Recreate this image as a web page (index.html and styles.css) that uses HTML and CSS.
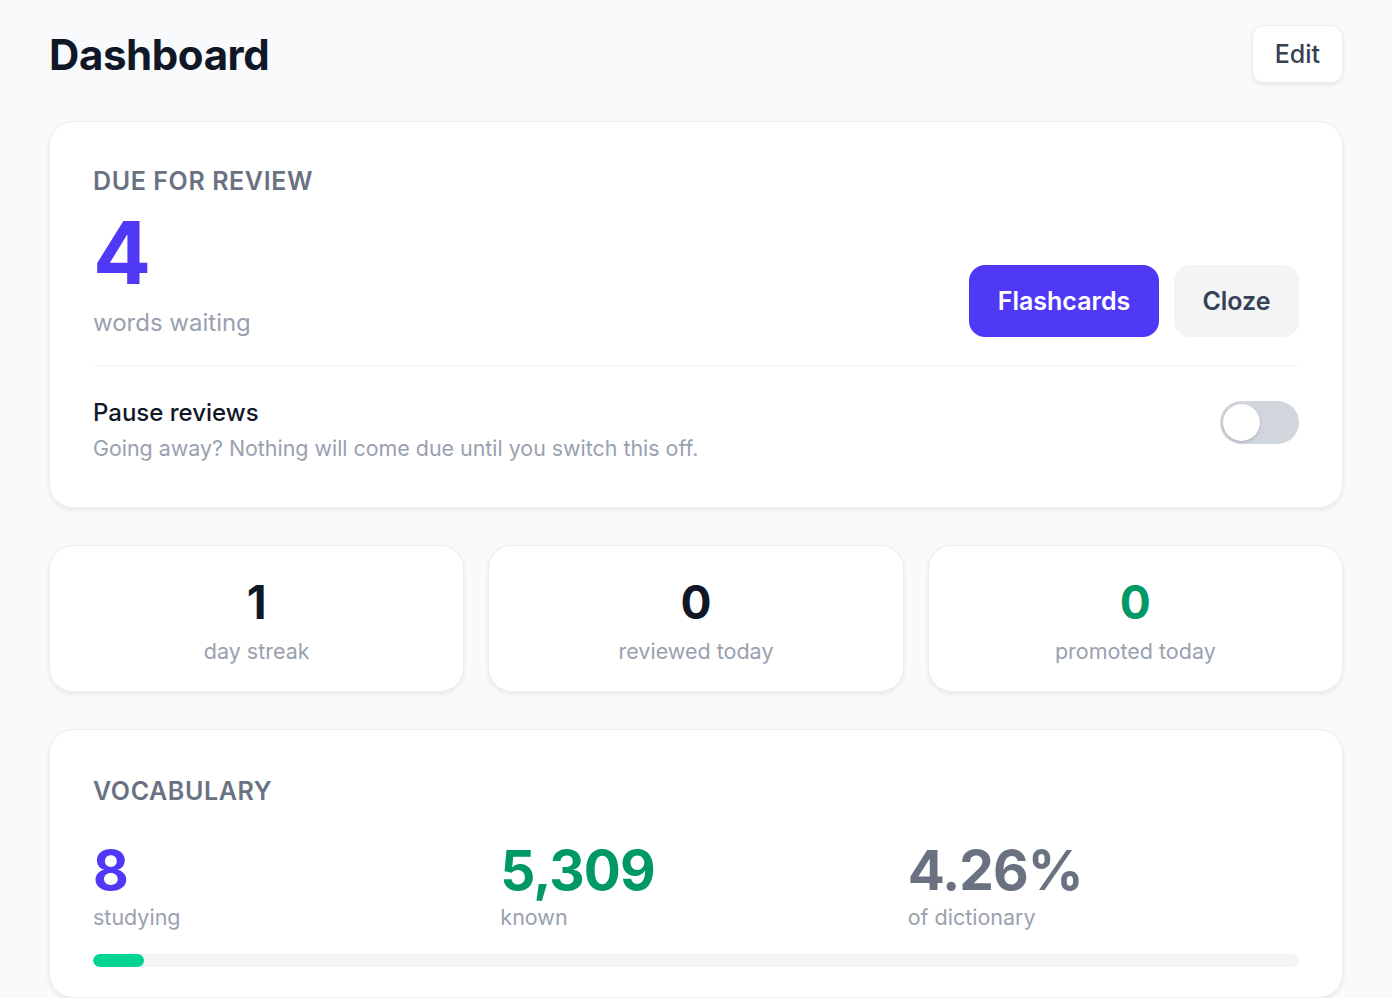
FILE: index.html
```html
<!DOCTYPE html>
<html lang="en">
  <head>
    <meta charset="UTF-8" />
    <meta name="viewport" content="width=device-width, initial-scale=1.0" />
    <title>Dashboard</title>
    <link rel="stylesheet" href="styles.css">
  </head>

  <body>
    <div class="page">
      <header class="top-bar">
        <h1>Dashboard</h1>
        <button class="edit-btn">Edit</button>
      </header>

      <!-- Due for review -->
      <section class="card review-card">
        <div class="review-row">
          <div>
            <div class="card-label">Due for review</div>
            <div class="due-count">4</div>
            <div class="due-sub">words waiting</div>
          </div>
          <div class="review-actions">
            <button class="btn btn-primary">Flashcards</button>
            <button class="btn btn-light">Cloze</button>
          </div>
        </div>

        <div class="pause-row">
          <div>
            <div class="pause-title">Pause reviews</div>
            <div class="pause-sub">Going away? Nothing will come due until you switch this off.</div>
          </div>
          <div class="toggle"><span class="knob"></span></div>
        </div>
      </section>

      <!-- Today stats -->
      <div class="stats">
        <div class="card stat">
          <div class="stat-num">1</div>
          <div class="stat-label">day streak</div>
        </div>
        <div class="card stat">
          <div class="stat-num">0</div>
          <div class="stat-label">reviewed today</div>
        </div>
        <div class="card stat">
          <div class="stat-num green">0</div>
          <div class="stat-label">promoted today</div>
        </div>
      </div>

      <!-- Vocabulary -->
      <section class="card vocab-card">
        <div class="card-label">Vocabulary</div>
        <div class="vocab-grid">
          <div>
            <div class="vocab-num indigo">8</div>
            <div class="vocab-label">studying</div>
          </div>
          <div>
            <div class="vocab-num green">5,309</div>
            <div class="vocab-label">known</div>
          </div>
          <div>
            <div class="vocab-num gray">4.26%</div>
            <div class="vocab-label">of dictionary</div>
          </div>
        </div>
        <div class="progress">
          <div class="progress-fill" style="width: 4.26%"></div>
        </div>
      </section>
    </div>
  </body>
</html>
```

FILE: styles.css
```css
body {
  margin: 0;
  background-color: #f9fafb;
  font-family: Inter, "Noto Sans", sans-serif;
  color: #101828;
}

.page {
  padding: 25px 49px 40px;
}

.top-bar {
  display: flex;
  justify-content: space-between;
  align-items: center;
  margin-bottom: 38px;
}

h1 {
  margin: 0;
  font-size: 42px;
  font-weight: 700;
  letter-spacing: -0.4px;
  color: #101828;
}

button {
  font-family: inherit;
  cursor: pointer;
  border: none;
}

.edit-btn {
  height: 58px;
  padding: 0 22px;
  background-color: white;
  border: 1px solid #eceef1;
  border-radius: 12px;
  font-size: 25px;
  font-weight: 500;
  color: #364153;
  box-shadow: 0px 2px 4px rgba(0, 0, 0, 0.08);
}

.card {
  background-color: white;
  border: 1px solid #eceef1;
  border-radius: 24px;
  box-shadow: 0px 2px 5px rgba(0, 0, 0, 0.08);
}

.review-card {
  padding: 44px 43px 46px;
}

.review-row {
  display: flex;
  justify-content: space-between;
  align-items: flex-end;
  padding-bottom: 28px;
  border-bottom: 1px solid #f0f1f3;
}

.card-label {
  font-size: 25px;
  font-weight: 600;
  letter-spacing: 0.6px;
  text-transform: uppercase;
  color: #6a7282;
}

.due-count {
  margin-top: 14px;
  font-size: 86px;
  font-weight: 700;
  line-height: 1;
  color: #4f39f6;
}

.due-sub {
  margin-top: 12px;
  font-size: 24px;
  color: #99a1af;
}

.review-actions {
  display: flex;
  gap: 15px;
}

.btn {
  height: 72px;
  border-radius: 16px;
  font-size: 25px;
  font-weight: 600;
}

.btn-primary {
  width: 190px;
  background-color: #4f39f6;
  color: white;
}

.btn-light {
  width: 125px;
  background-color: #f3f4f6;
  color: #364153;
}

.pause-row {
  display: flex;
  justify-content: space-between;
  align-items: center;
  padding-top: 32px;
}

.pause-title {
  font-size: 24px;
  font-weight: 500;
  color: #101828;
}

.pause-sub {
  margin-top: 8px;
  font-size: 21.4px;
  color: #99a1af;
}

.toggle {
  width: 79px;
  height: 43px;
  border-radius: 22px;
  background-color: #d1d5dc;
  display: flex;
  align-items: center;
  padding: 0 3px;
  box-sizing: border-box;
  margin-top: -14px;
}

.knob {
  width: 37px;
  height: 37px;
  border-radius: 50%;
  background-color: white;
  box-shadow: 0px 1px 3px rgba(0, 0, 0, 0.2);
}

.stats {
  display: grid;
  grid-template-columns: repeat(3, 1fr);
  gap: 24px;
  margin: 37px 0 37px;
}

.stat {
  height: 147px;
  box-sizing: border-box;
  padding-top: 31px;
  display: flex;
  flex-direction: column;
  align-items: center;
}

.stat-num {
  font-size: 46px;
  font-weight: 700;
  line-height: 1.1;
  color: #101828;
}

.stat-label {
  margin-top: 10px;
  font-size: 21.5px;
  color: #99a1af;
}

.green {
  color: #009966;
}

.indigo {
  color: #4f39f6;
}

.gray {
  color: #6a7282;
}

.vocab-card {
  padding: 46px 43px 30px;
}

.vocab-grid {
  display: grid;
  grid-template-columns: repeat(3, 1fr);
  gap: 16px;
  margin-top: 34px;
}

.vocab-num {
  font-size: 55px;
  font-weight: 700;
  line-height: 1.1;
  letter-spacing: -1px;
}

.vocab-label {
  margin-top: 3px;
  font-size: 21.5px;
  color: #99a1af;
}

.progress {
  margin-top: 24px;
  height: 13px;
  border-radius: 7px;
  background-color: #f3f4f6;
  overflow: hidden;
}

.progress-fill {
  height: 100%;
  border-radius: 7px;
  background-color: #00d492;
}
```
